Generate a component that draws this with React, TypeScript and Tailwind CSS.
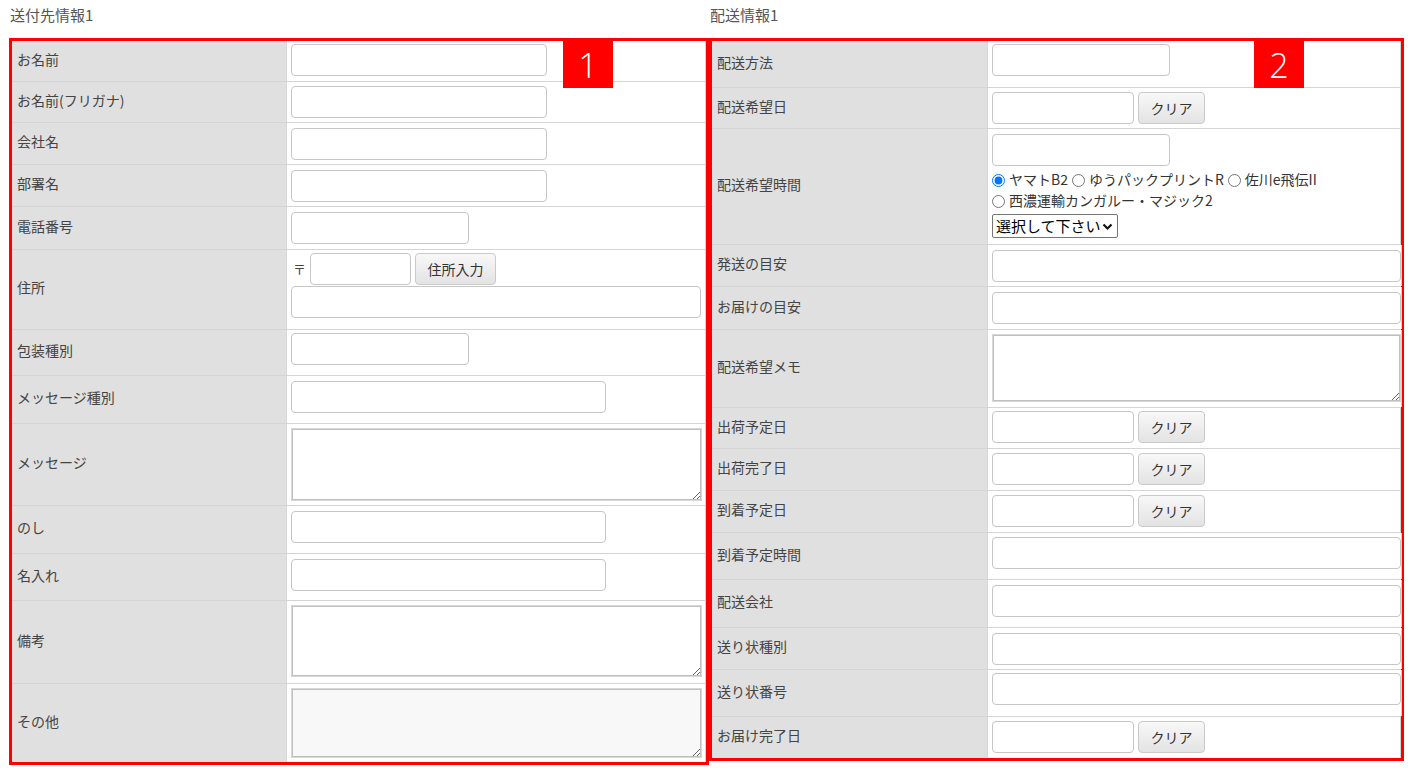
import type { ReactNode } from "react";

type Row = {
    label: string;
    h: string;
    pt: string;
    field: ReactNode;
};

function TextInput({ className }: { className: string }) {
    return (
        <input
            type="text"
            className={`block h-[32px] rounded-[4px] border border-[#c6c6c6] bg-white px-2 text-[14px] outline-none ${className}`}
        />
    );
}

function Area({ className }: { className: string }) {
    return (
        <textarea
            className={`block border border-[#d8d8d8] shadow-[inset_0_0_0_1px_#c0c0c0] outline-none ${className}`}
        />
    );
}

function GrayButton({ children, className }: { children: ReactNode; className: string }) {
    return (
        <button
            type="button"
            className={`h-[32px] rounded-[4px] border border-[#cacaca] bg-linear-to-b from-[#f8f8f8] to-[#e3e3e3] text-[14px] text-[#333] ${className}`}
        >
            {children}
        </button>
    );
}

function DateField() {
    return (
        <div className="flex gap-[4px]">
            <TextInput className="w-[142px]" />
            <GrayButton className="w-[67px]">クリア</GrayButton>
        </div>
    );
}

function Radio({ label, checked }: { label: string; checked?: boolean }) {
    return (
        <label className="flex h-[21px] items-center mr-[4px]">
            <input type="radio" name="carrier" defaultChecked={checked} className="w-[13px] h-[13px] mr-[4px] accent-[#0075ff]" />
            <span className="leading-[21px] pb-[2px]">{label}</span>
        </label>
    );
}

const leftRows: Row[] = [
    { label: "お名前", h: "h-[40px]", pt: "pt-[3px]", field: <TextInput className="w-[256px]" /> },
    { label: "お名前(フリガナ)", h: "h-[41px]", pt: "pt-[4px]", field: <TextInput className="w-[256px]" /> },
    { label: "会社名", h: "h-[42px]", pt: "pt-[5px]", field: <TextInput className="w-[256px]" /> },
    { label: "部署名", h: "h-[42px]", pt: "pt-[5px]", field: <TextInput className="w-[256px]" /> },
    { label: "電話番号", h: "h-[43px]", pt: "pt-[5px]", field: <TextInput className="w-[178px]" /> },
    {
        label: "住所",
        h: "h-[80px]",
        pt: "pt-[3px]",
        field: (
            <div className="flex flex-col gap-[1px]">
                <div className="flex items-center">
                    <span className="w-[19px] pl-[2px] text-[13px] text-[#444]">〒</span>
                    <TextInput className="w-[101px]" />
                    <GrayButton className="ml-[4px] w-[81px]">住所入力</GrayButton>
                </div>
                <TextInput className="w-[410px]" />
            </div>
        ),
    },
    { label: "包装種別", h: "h-[46px]", pt: "pt-[3px]", field: <TextInput className="w-[178px]" /> },
    { label: "メッセージ種別", h: "h-[48px]", pt: "pt-[5px]", field: <TextInput className="w-[315px]" /> },
    { label: "メッセージ", h: "h-[82px]", pt: "pt-[4px]", field: <Area className="w-[411px] h-[73px] bg-white" /> },
    { label: "のし", h: "h-[48px]", pt: "pt-[5px]", field: <TextInput className="w-[315px]" /> },
    { label: "名入れ", h: "h-[47px]", pt: "pt-[5px]", field: <TextInput className="w-[315px]" /> },
    { label: "備考", h: "h-[83px]", pt: "pt-[4px]", field: <Area className="w-[411px] h-[72px] bg-white" /> },
    { label: "その他", h: "h-[79px]", pt: "pt-[4px]", field: <Area className="w-[411px] h-[70px] bg-[#f8f8f8]" /> },
];

const rightRows: Row[] = [
    { label: "配送方法", h: "h-[46px]", pt: "pt-[3px]", field: <TextInput className="w-[178px]" /> },
    { label: "配送希望日", h: "h-[41px]", pt: "pt-[4px]", field: <DateField /> },
    {
        label: "配送希望時間",
        h: "h-[116px]",
        pt: "pt-[5px]",
        field: (
            <div className="flex flex-col">
                <TextInput className="w-[178px]" />
                <div className="mt-[4px] flex w-[408px] flex-wrap text-[14px] text-[#333]">
                    <Radio label="ヤマトB2" checked />
                    <Radio label="ゆうパックプリントR" />
                    <Radio label="佐川e飛伝II" />
                    <Radio label="西濃運輸カンガルー・マジック2" />
                </div>
                <div className="relative mt-[2px] w-[126px]">
                    <select className="block h-[24px] w-[126px] appearance-none rounded-[2px] border border-[#767676] bg-white pl-[3px] text-[15px] leading-[20px] text-black outline-none">
                        <option>選択して下さい</option>
                    </select>
                    <svg className="pointer-events-none absolute right-[5px] top-[9px]" width="11" height="8" viewBox="0 0 11 8">
                        <path d="M1.5 1.5 L5.5 5.5 L9.5 1.5" fill="none" stroke="#111" strokeWidth="2.2" />
                    </svg>
                </div>
            </div>
        ),
    },
    { label: "発送の目安", h: "h-[42px]", pt: "pt-[5px]", field: <TextInput className="w-[409px]" /> },
    { label: "お届けの目安", h: "h-[43px]", pt: "pt-[5px]", field: <TextInput className="w-[409px]" /> },
    { label: "配送希望メモ", h: "h-[78px]", pt: "pt-[4px]", field: <Area className="w-[409px] h-[68px] bg-white" /> },
    { label: "出荷予定日", h: "h-[41px]", pt: "pt-[3px]", field: <DateField /> },
    { label: "出荷完了日", h: "h-[42px]", pt: "pt-[4px]", field: <DateField /> },
    { label: "到着予定日", h: "h-[42px]", pt: "pt-[4px]", field: <DateField /> },
    { label: "到着予定時間", h: "h-[47px]", pt: "pt-[4px]", field: <TextInput className="w-[409px]" /> },
    { label: "配送会社", h: "h-[48px]", pt: "pt-[5px]", field: <TextInput className="w-[409px]" /> },
    { label: "送り状種別", h: "h-[42px]", pt: "pt-[5px]", field: <TextInput className="w-[409px]" /> },
    { label: "送り状番号", h: "h-[47px]", pt: "pt-[3px]", field: <TextInput className="w-[409px]" /> },
    { label: "お届け完了日", h: "h-[42px]", pt: "pt-[4px]", field: <DateField /> },
];

function FormTable({ rows, labelW }: { rows: Row[]; labelW: string }) {
    return (
        <div className="flex flex-col">
            {rows.map((row, i) => (
                <div key={row.label} className={`flex ${row.h} ${i > 0 ? "border-t border-[#d4d4d4]" : ""}`}>
                    <div className={`${labelW} shrink-0 bg-[#e0e0e0] flex items-center pl-[5px] pb-[4px] text-[14px] text-[#444] border-r border-[#d6d6d6]`}>
                        {row.label}
                    </div>
                    <div className={`flex-1 bg-white pl-[4px] ${row.pt} border-r border-[#d4d4d4]`}>{row.field}</div>
                </div>
            ))}
        </div>
    );
}

function Badge({ n, className }: { n: string; className: string }) {
    return (
        <div className={`absolute top-0 w-[50px] h-[47px] bg-[#ff0000] flex items-center justify-center text-white text-[34px] font-light leading-none font-['Open_Sans',sans-serif] ${className}`}>
            {n}
        </div>
    );
}

export default function App() {
    return (
        <div className="w-[1415px] h-[770px] bg-white overflow-hidden font-['Noto_Sans_CJK_JP',sans-serif]">
            <div className="flex pl-[9px]">
                {/* 送付先 */}
                <section className="w-[700px]">
                    <h2 className="h-[38px] pt-[5px] pl-[1px] text-[15px] leading-[20px] text-[#555]">送付先情報1</h2>
                    <div className="relative border-[3px] border-[#ff0000]">
                        <FormTable rows={leftRows} labelW="w-[275px]" />
                        <Badge n="1" className="left-[551px]" />
                    </div>
                </section>

                {/* 配送 */}
                <section className="w-[695px]">
                    <h2 className="h-[38px] pt-[5px] pl-[1px] text-[15px] leading-[20px] text-[#555]">配送情報1</h2>
                    <div className="relative border-[3px] border-[#ff0000]">
                        <FormTable rows={rightRows} labelW="w-[276px]" />
                        <Badge n="2" className="left-[542px]" />
                    </div>
                </section>
            </div>
        </div>
    );
}
